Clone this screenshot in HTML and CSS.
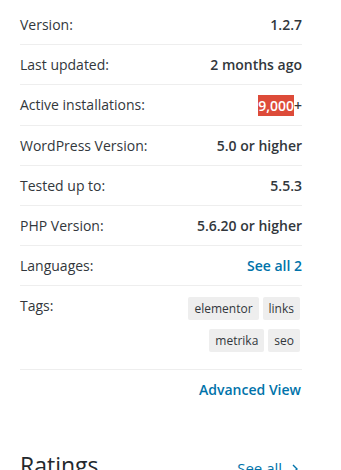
FILE: index.html
```html
<!DOCTYPE html>
<html lang="en">
<head>
  <meta charset="UTF-8" />
  <meta name="viewport" content="width=device-width, initial-scale=1.0" />
  <title>Plugin meta</title>
  <link rel="stylesheet" href="styles.css">
</head>
<body>
  <div class="widget-meta">
    <ul class="meta-list">
      <li>Version: <strong>1.2.7</strong></li>
      <li>Last updated: <strong>2 months ago</strong></li>
      <li>Active installations: <strong><span class="hl">9,000</span>+</strong></li>
      <li>WordPress Version: <strong>5.0 or higher</strong></li>
      <li>Tested up to: <strong>5.5.3</strong></li>
      <li>PHP Version: <strong>5.6.20 or higher</strong></li>
      <li>Languages: <a href="#" class="link-strong">See all 2</a></li>
      <li class="tags-row">
        <span>Tags:</span>
        <div class="tags">
          <a href="#">elementor</a>
          <a href="#">links</a>
          <a href="#">metrika</a>
          <a href="#">seo</a>
        </div>
      </li>
    </ul>
    <p class="advanced"><a href="#" class="link-strong">Advanced View</a></p>
  </div>

  <div class="ratings-head">
    <h3>Ratings</h3>
    <a href="#" class="see-all">See all
      <svg class="chev" width="6" height="10" viewBox="0 0 6 10"><path d="M1 1l4 4-4 4" fill="none" stroke="currentColor" stroke-width="1.4"/></svg>
    </a>
  </div>
</body>
</html>
```

FILE: styles.css
```css
body {
  margin: 0;
  background: #ffffff;
  color: #32373c;
  font-family: "Open Sans", "Noto Sans", Arial, sans-serif;
  font-size: 14px;
}
a {
  color: #0073aa;
  text-decoration: none;
}
.widget-meta {
  width: 282px;
  margin-left: 20px;
  padding-top: 5px;
}
.meta-list {
  list-style: none;
  margin: 0;
  padding: 0;
}
.meta-list li {
  display: flex;
  justify-content: space-between;
  align-items: flex-start;
  padding: 10px 0 9px;
  line-height: 20px;
  border-bottom: 1px solid #eeeeee;
}
.meta-list strong {
  font-weight: 600;
}
.hl {
  background: #dd4b39;
  color: #ffffff;
  display: inline-block;
  line-height: 21px;
}
.link-strong {
  font-weight: 600;
}
.tags-row {
  padding-bottom: 17px !important;
}
.tags {
  display: flex;
  flex-wrap: wrap;
  justify-content: flex-end;
  width: 120px;
  gap: 9px 4px;
  margin-top: 1px;
  margin-right: 2px;
}
.tags a {
  background: #eeeeee;
  color: #32373c;
  font-size: 12px;
  line-height: 19px;
  padding: 2px 6px;
  border-radius: 2px;
}
.advanced {
  text-align: right;
  margin: 0;
  padding: 10px 1px 0 0;
  line-height: 20px;
}
.ratings-head {
  width: 282px;
  margin: 49px 0 0 20px;
  display: flex;
  justify-content: space-between;
  align-items: baseline;
}
.ratings-head h3 {
  margin: 0;
  font-size: 23px;
  font-weight: 400;
  color: #23282d;
}
.see-all {
  font-size: 15px;
  margin-right: 4px;
}
.chev {
  margin-left: 6px;
}
```
